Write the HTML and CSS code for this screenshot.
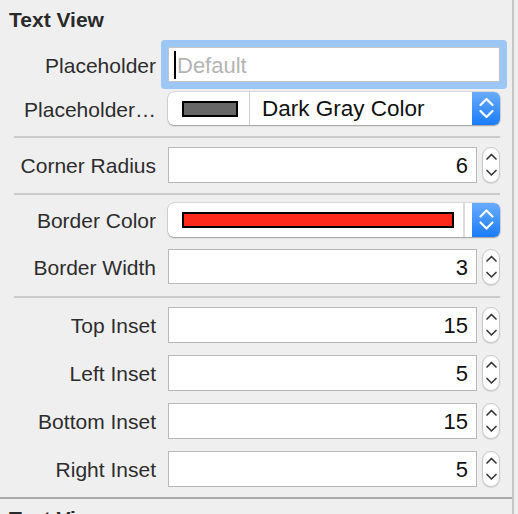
FILE: index.html
```html
<!DOCTYPE html>
<html>
<head>
<meta charset="utf-8">
<link rel="stylesheet" href="styles.css">
</head>
<body>
<div class="panel">
  <section class="section">
    <h2 class="title">Text View</h2>
    <div class="row row-first row-35">
      <span class="label">Placeholder</span>
      <div class="field focus"><span class="caret"></span><span class="placeholder">Default</span></div>
    </div>
    <div class="row row-pop1">
      <span class="label">Placeholder…</span>
      <div class="popup">
        <span class="well well-gray"><span class="swatch swatch-gray"></span></span>
        <span class="divider"></span>
        <span class="popup-text">Dark Gray Color</span>
        <span class="popup-btn">
          <svg width="28" height="33" viewBox="0 0 28 33"><path d="M8.5 13 L14.5 7 L20.5 13" fill="none" stroke="#fff" stroke-width="2.2" stroke-linecap="round" stroke-linejoin="round"/><path d="M8.5 19 L14.5 25 L20.5 19" fill="none" stroke="#fff" stroke-width="2.2" stroke-linecap="round" stroke-linejoin="round"/></svg>
        </span>
      </div>
    </div>
    <hr class="sep sep-1">
    <div class="row row-corner">
      <span class="label">Corner Radius</span>
      <div class="field num">6</div>
      <span class="stepper"><svg width="18" height="36" viewBox="0 0 18 36"><path d="M5 12 L9.5 7.5 L14 12" fill="none" stroke="#3a3a3a" stroke-width="1.7" stroke-linecap="round" stroke-linejoin="round"/><path d="M5 23.5 L9.5 28 L14 23.5" fill="none" stroke="#3a3a3a" stroke-width="1.7" stroke-linecap="round" stroke-linejoin="round"/></svg></span>
    </div>
    <hr class="sep sep-2">
    <div class="row row-pop2">
      <span class="label">Border Color</span>
      <div class="popup popup-34">
        <span class="well well-red"><span class="swatch swatch-red"></span></span>
        <span class="divider"></span>
        <span class="gap-white"></span>
        <span class="popup-btn">
          <svg width="28" height="34" viewBox="0 0 28 34"><path d="M8.5 13.5 L14.5 7.5 L20.5 13.5" fill="none" stroke="#fff" stroke-width="2.2" stroke-linecap="round" stroke-linejoin="round"/><path d="M8.5 19.5 L14.5 25.5 L20.5 19.5" fill="none" stroke="#fff" stroke-width="2.2" stroke-linecap="round" stroke-linejoin="round"/></svg>
        </span>
      </div>
    </div>
    <div class="row row-bw">
      <span class="label">Border Width</span>
      <div class="field num">3</div>
      <span class="stepper"><svg width="18" height="36" viewBox="0 0 18 36"><path d="M5 12 L9.5 7.5 L14 12" fill="none" stroke="#3a3a3a" stroke-width="1.7" stroke-linecap="round" stroke-linejoin="round"/><path d="M5 23.5 L9.5 28 L14 23.5" fill="none" stroke="#3a3a3a" stroke-width="1.7" stroke-linecap="round" stroke-linejoin="round"/></svg></span>
    </div>
    <hr class="sep sep-3">
    <div class="row row-top">
      <span class="label">Top Inset</span>
      <div class="field num">15</div>
      <span class="stepper"><svg width="18" height="36" viewBox="0 0 18 36"><path d="M5 12 L9.5 7.5 L14 12" fill="none" stroke="#3a3a3a" stroke-width="1.7" stroke-linecap="round" stroke-linejoin="round"/><path d="M5 23.5 L9.5 28 L14 23.5" fill="none" stroke="#3a3a3a" stroke-width="1.7" stroke-linecap="round" stroke-linejoin="round"/></svg></span>
    </div>
    <div class="row row-inset">
      <span class="label">Left Inset</span>
      <div class="field num">5</div>
      <span class="stepper"><svg width="18" height="36" viewBox="0 0 18 36"><path d="M5 12 L9.5 7.5 L14 12" fill="none" stroke="#3a3a3a" stroke-width="1.7" stroke-linecap="round" stroke-linejoin="round"/><path d="M5 23.5 L9.5 28 L14 23.5" fill="none" stroke="#3a3a3a" stroke-width="1.7" stroke-linecap="round" stroke-linejoin="round"/></svg></span>
    </div>
    <div class="row row-inset">
      <span class="label">Bottom Inset</span>
      <div class="field num">15</div>
      <span class="stepper"><svg width="18" height="36" viewBox="0 0 18 36"><path d="M5 12 L9.5 7.5 L14 12" fill="none" stroke="#3a3a3a" stroke-width="1.7" stroke-linecap="round" stroke-linejoin="round"/><path d="M5 23.5 L9.5 28 L14 23.5" fill="none" stroke="#3a3a3a" stroke-width="1.7" stroke-linecap="round" stroke-linejoin="round"/></svg></span>
    </div>
    <div class="row row-inset">
      <span class="label">Right Inset</span>
      <div class="field num">5</div>
      <span class="stepper"><svg width="18" height="36" viewBox="0 0 18 36"><path d="M5 12 L9.5 7.5 L14 12" fill="none" stroke="#3a3a3a" stroke-width="1.7" stroke-linecap="round" stroke-linejoin="round"/><path d="M5 23.5 L9.5 28 L14 23.5" fill="none" stroke="#3a3a3a" stroke-width="1.7" stroke-linecap="round" stroke-linejoin="round"/></svg></span>
    </div>
  </section>
  <hr class="sep-full">
  <section class="section">
    <h2 class="title">Text View</h2>
  </section>
</div>
</body>
</html>
```
FILE: styles.css
```css
html, body {
  margin: 0;
  padding: 0;
  background: #efefef;
  overflow: hidden;
}
body {
  font-family: "Liberation Sans", Arial, sans-serif;
  width: 518px;
  height: 514px;
}
.panel {
  width: 512px;
  height: 514px;
  border-right: 2px solid #c6c6c6;
  background: #efefef;
  overflow: hidden;
}
.section {
  display: flex;
  flex-direction: column;
}
.title {
  margin: 0;
  padding: 9px 0 0 9px;
  height: 21px;
  font-size: 21px;
  line-height: 21px;
  font-weight: bold;
  color: #2a2a2a;
}
.row {
  display: flex;
  align-items: center;
  height: 36px;
}
.row-first { margin-top: 17px; height: 35px; }
.row-pop1 { margin-top: 10px; height: 33px; }
.row-corner { margin-top: 9px; }
.row-pop2 { margin-top: 8px; height: 34px; }
.row-bw { margin-top: 12px; height: 35px; }
.row-top { margin-top: 9px; }
.row-inset { margin-top: 12px; }

.label {
  width: 156px;
  flex: none;
  text-align: right;
  font-size: 21px;
  color: #2d2d2d;
  margin-right: 12px;
  white-space: nowrap;
  margin-top: 2px;
}
.field {
  box-sizing: border-box;
  height: 100%;
  background: #fff;
  border: 1px solid #b9b9b9;
  font-size: 22px;
  color: #111;
  display: flex;
  align-items: center;
}
.field.focus {
  width: 332px;
  border-radius: 1px;
  border-color: #c4c4c4;
  box-shadow: 0 0 0 7px #9cc6f3;
  padding-left: 5px;
}
.caret {
  width: 2px;
  height: 28px;
  background: #000;
  flex: none;
}
.placeholder {
  color: #b4b4b4;
  margin-left: 1px;
  margin-top: 2px;
}
.field.num {
  width: 309px;
  justify-content: flex-end;
  padding-right: 8px;
  padding-top: 2px;
}
.stepper {
  box-sizing: border-box;
  width: 18px;
  height: 36px;
  margin-left: 5px;
  background: #fff;
  border: 1px solid #c9c9c9;
  border-radius: 9px;
  box-shadow: 0 1px 1px rgba(0,0,0,0.12);
  display: flex;
  flex: none;
}
.stepper svg {
  margin: -1px;
}
.popup {
  box-sizing: border-box;
  width: 332px;
  height: 33px;
  background: #fff;
  border-radius: 6px;
  box-shadow: 0 0 0 0.5px rgba(0,0,0,0.18), 0 1px 1.5px rgba(0,0,0,0.28);
  display: flex;
  align-items: center;
  overflow: hidden;
}
.popup-34 { height: 34px; }
.well {
  box-sizing: border-box;
  height: 16px;
  margin-left: 14px;
  border: 2px solid #000;
  flex: none;
  display: flex;
}
.well-gray { width: 56px; }
.well-red { width: 272px; }
.swatch { flex: 1; }
.swatch-gray { background: #676767; }
.swatch-red { background: #fc2a1b; }
.divider {
  width: 1px;
  align-self: stretch;
  background: #d2d2d2;
  margin-left: 11px;
  flex: none;
}
.well-red + .divider { margin-left: 9px; width: 2px; background: #dcdcdc; }
.popup-text {
  flex: 1;
  margin-left: 12px;
  font-size: 22.5px;
  color: #111;
  white-space: nowrap;
  margin-top: 1px;
}
.gap-white { flex: 1; }
.popup-btn {
  width: 28px;
  align-self: stretch;
  flex: none;
  background: linear-gradient(#6aacfc, #1a7bf8);
  display: flex;
}
.sep {
  margin: 0 0 0 14px;
  width: 486px;
  height: 2px;
  border: none;
  background: #cbcbcb;
}
.sep-1 { margin-top: 11px; }
.sep-2 { margin-top: 10px; }
.sep-3 { margin-top: 12px; }
.sep-full {
  margin: 10px 0 0 0;
  width: 512px;
  height: 2px;
  border: none;
  background: #ababab;
}
```
